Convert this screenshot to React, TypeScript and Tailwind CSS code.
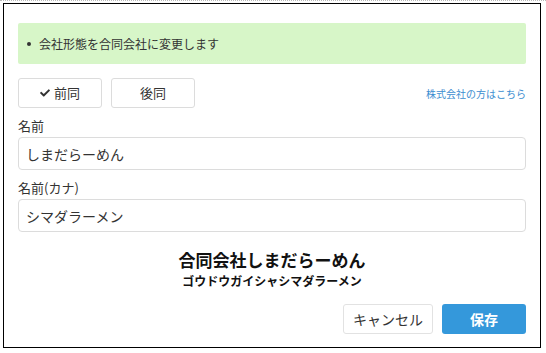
import React, { useState } from "react";
import { FaCheck } from "react-icons/fa";

const font = "font-['Noto_Sans_CJK_JP','Noto_Sans',sans-serif]";

const App = () => {
  const [name, setName] = useState("しまだらーめん");
  const [kana, setKana] = useState("シマダラーメン");

  return (
    <div className={`w-[546px] h-[353px] bg-white border-t border-dotted border-[#bbbbbb] ${font}`}>
      <div className="ml-[3px] mt-[2px] w-[538px] border border-black bg-white px-[14px] pt-[19px] pb-[13px] text-[#333]">
        <div className="h-[41px] rounded-[2px] bg-[#d7f6c8] flex items-center pl-[9px] text-[12px]">
          <span className="w-[4px] h-[4px] rounded-full bg-[#333] mr-[8px]" />
          <span>会社形態を合同会社に変更します</span>
        </div>

        <div className="mt-[14px] flex items-center">
          <button className="w-[84px] h-[30px] border border-[#dcdcdc] rounded-[3px] bg-white flex items-center justify-center gap-[4px] text-[13px] text-[#333]">
            <FaCheck size={10} />
            <span>前同</span>
          </button>
          <button className="ml-[9px] w-[84px] h-[30px] border border-[#dcdcdc] rounded-[3px] bg-white flex items-center justify-center text-[13px] text-[#333]">
            後同
          </button>
          <a className="ml-auto text-[10px] text-[#3b8dd0] cursor-pointer">株式会社の方はこちら</a>
        </div>

        <label className="block mt-[9px] text-[13px] leading-[18px]">名前</label>
        <input
          value={name}
          onChange={(e) => setName(e.target.value)}
          className="mt-[2px] block w-full h-[33px] border border-[#dcdcdc] rounded-[4px] pl-[7px] text-[14px] text-[#333] outline-none"
        />

        <label className="block mt-[9px] text-[13px] leading-[18px]">名前(カナ)</label>
        <input
          value={kana}
          onChange={(e) => setKana(e.target.value)}
          className="mt-[2px] block w-full h-[33px] border border-[#dcdcdc] rounded-[4px] pl-[7px] text-[14px] text-[#333] outline-none"
        />

        <div className="mt-[17px] text-center text-[17px] leading-[22px] font-bold text-[#111]">
          合同会社{name}
        </div>
        <div className="mt-[2px] text-center text-[12px] leading-[16px] font-bold text-[#111]">
          ゴウドウガイシャ{kana}
        </div>

        <div className="mt-[15px] flex justify-end gap-[9px]">
          <button className="w-[90px] h-[30px] border border-[#e2e2e2] rounded-[3px] bg-white text-[14px] text-[#333]">
            キャンセル
          </button>
          <button className="w-[84px] h-[30px] rounded-[3px] bg-[#3498db] text-[14px] font-bold text-white">
            保存
          </button>
        </div>
      </div>
    </div>
  );
};

export default App;
